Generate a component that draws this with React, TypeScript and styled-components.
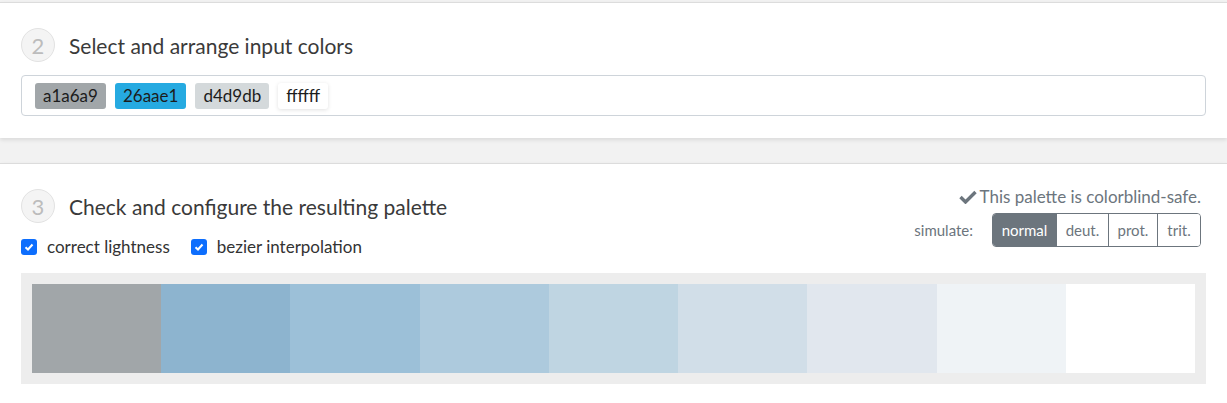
import React from 'react';
import styled, { createGlobalStyle } from 'styled-components';

const GlobalStyle = createGlobalStyle`
    body {
        margin: 0;
        background: #f2f2f2;
        font-family: Lato, "Open Sans", sans-serif;
        color: #333;
    }
`;

const Page = styled.div`
    padding-top: 2px;
`;

const Panel = styled.section<{ gap?: boolean }>`
    background: #fff;
    border-top: 1px solid #dcdcdc;
    padding: ${props => (props.gap ? '23px' : '25px')} 21px 22px 21px;
    margin-top: ${props => (props.gap ? '25px' : '0')};
    box-shadow: 0 2px 4px rgba(0, 0, 0, 0.1);
`;

const StepHead = styled.div`
    display: flex;
    align-items: center;
    gap: 14px;
`;

const StepNum = styled.div`
    width: 32px;
    height: 32px;
    border-radius: 50%;
    border: 1px solid #e2e2e2;
    background: #f4f4f4;
    color: #bcbcbc;
    font-size: 22px;
    display: flex;
    align-items: center;
    justify-content: center;
`;

const StepTitle = styled.h2`
    margin: 0;
    font-size: 21px;
    font-weight: 400;
    color: #3a3a3a;
`;

const ColorInput = styled.div`
    margin-top: 13px;
    height: 39px;
    border: 1px solid #ced4da;
    border-radius: 4px;
    display: flex;
    align-items: center;
    gap: 9px;
    padding: 0 13px;
`;

const Chip = styled.span<{ bg: string }>`
    background: ${props => props.bg};
    color: #1c1c1c;
    font-size: 17px;
    line-height: 26px;
    height: 26px;
    padding: 0 8px;
    border-radius: 3px;
    box-shadow: ${props => (props.bg === '#ffffff' ? '0 1px 4px rgba(0,0,0,0.12)' : 'none')};
`;

const ConfigRow = styled.div`
    display: flex;
    justify-content: space-between;
    align-items: flex-start;
`;

const LeftCol = styled.div`
    display: flex;
    flex-direction: column;
    margin-top: 2px;
`;

const Options = styled.div`
    display: flex;
    gap: 21px;
    margin-top: 14px;
`;

const Option = styled.label`
    display: flex;
    align-items: center;
    gap: 10px;
    font-size: 17px;
    line-height: 20px;
    color: #333;
`;

const Box = styled.span`
    width: 16px;
    height: 16px;
    border-radius: 3px;
    background: #0d6efd;
    display: flex;
    align-items: center;
    justify-content: center;
`;

const RightCol = styled.div`
    display: flex;
    flex-direction: column;
    align-items: flex-end;
    gap: 6px;
    margin-right: 5px;
`;

const SafeNote = styled.div`
    display: flex;
    align-items: center;
    gap: 3px;
    font-size: 17px;
    line-height: 20px;
    color: #6c757d;
`;

const SimRow = styled.div`
    display: flex;
    align-items: center;
    gap: 19px;
`;

const SimLabel = styled.span`
    font-size: 15px;
    color: #6c757d;
`;

const BtnGroup = styled.div`
    display: flex;
    border: 1px solid #6c757d;
    border-radius: 4px;
    overflow: hidden;
`;

const SimBtn = styled.span<{ active?: boolean; w: number }>`
    width: ${props => props.w}px;
    height: 32px;
    display: flex;
    align-items: center;
    justify-content: center;
    font-size: 15px;
    background: ${props => (props.active ? '#6c757d' : '#fff')};
    color: ${props => (props.active ? '#fff' : '#6c757d')};
    & + & {
        border-left: 1px solid #6c757d;
    }
`;

const PaletteFrame = styled.div`
    margin-top: 16px;
    background: #ededed;
    padding: 11px;
    display: flex;
`;

const Swatch = styled.div<{ bg: string }>`
    flex: 1;
    height: 89px;
    background: ${props => props.bg};
`;

const chips = ['#a1a6a9', '#26aae1', '#d4d9db', '#ffffff'];
const swatches = ['#a1a6a9', '#8db4cf', '#9cc0d8', '#adcadd', '#bfd5e2', '#d1dee8', '#e1e7ee', '#eff3f6', '#ffffff'];
const sims = [
    { label: 'normal', w: 63 },
    { label: 'deut.', w: 51 },
    { label: 'prot.', w: 48 },
    { label: 'trit.', w: 42 },
];

const Tick = () => (
    <svg width="10" height="8" viewBox="0 0 10 8">
        <path d="M1.5 4.2 L4 6.5 L8.5 1.5" stroke="#fff" strokeWidth="2" fill="none" />
    </svg>
);

const App: React.FC = () => {
    return (
        <Page>
            <GlobalStyle />
            <Panel>
                <StepHead>
                    <StepNum>2</StepNum>
                    <StepTitle>Select and arrange input colors</StepTitle>
                </StepHead>
                <ColorInput>
                    {chips.map(c => (
                        <Chip key={c} bg={c}>{c.slice(1)}</Chip>
                    ))}
                </ColorInput>
            </Panel>
            <Panel gap>
                <ConfigRow>
                    <LeftCol>
                        <StepHead>
                            <StepNum>3</StepNum>
                            <StepTitle>Check and configure the resulting palette</StepTitle>
                        </StepHead>
                        <Options>
                            <Option><Box><Tick /></Box>correct lightness</Option>
                            <Option><Box><Tick /></Box>bezier interpolation</Option>
                        </Options>
                    </LeftCol>
                    <RightCol>
                        <SafeNote>
                            <svg width="18" height="14" viewBox="0 0 18 14">
                                <path d="M1.5 7 L6.5 12 L16.5 2" stroke="#6c757d" strokeWidth="3.4" fill="none" />
                            </svg>
                            This palette is colorblind-safe.
                        </SafeNote>
                        <SimRow>
                            <SimLabel>simulate:</SimLabel>
                            <BtnGroup>
                                {sims.map((s, i) => (
                                    <SimBtn key={s.label} w={s.w} active={i === 0}>{s.label}</SimBtn>
                                ))}
                            </BtnGroup>
                        </SimRow>
                    </RightCol>
                </ConfigRow>
                <PaletteFrame>
                    {swatches.map((c, i) => (
                        <Swatch key={i} bg={c} />
                    ))}
                </PaletteFrame>
            </Panel>
        </Page>
    );
};

export default App;
